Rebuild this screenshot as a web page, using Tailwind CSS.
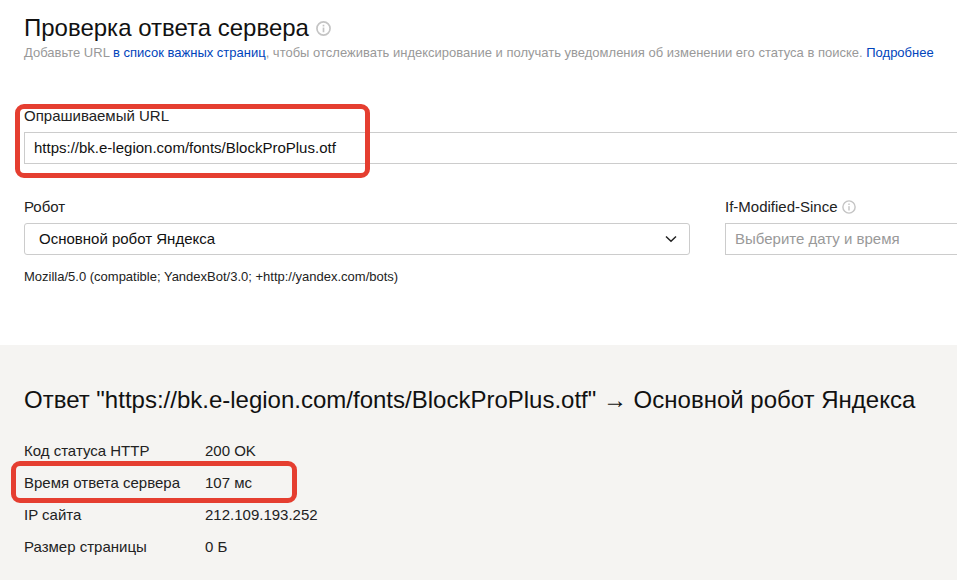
<!DOCTYPE html>
<html lang="ru">
<head>
    <meta charset="UTF-8">
    <title>Проверка ответа сервера</title>
    <script src="https://cdn.jsdelivr.net/npm/@tailwindcss/browser@4"></script>
</head>
<body class="relative w-[957px] h-[580px] overflow-hidden bg-white text-[#111] font-['Liberation_Sans',Arial,sans-serif]">

<div class="h-[345px] pl-6 pt-[13px]">
    <div class="flex items-center h-[30px] gap-[7px]">
        <h1 class="text-[24px] leading-[30px]">Проверка ответа сервера</h1>
        <svg class="w-[15px] h-[15px] mt-[1px]" viewBox="0 0 16 16" fill="none">
            <circle cx="8" cy="8" r="7" stroke="#c4c4c4" stroke-width="1.8"/>
            <rect x="7.1" y="7" width="1.8" height="5" fill="#c4c4c4"/>
            <rect x="7.1" y="4" width="1.8" height="1.8" fill="#c4c4c4"/>
        </svg>
    </div>
    <p class="text-[13px] leading-[16px] mt-[2px] text-[#999] whitespace-nowrap">
        Добавьте URL <a class="text-[#04b]">в список важных страниц</a>, чтобы отслеживать индексирование и получать уведомления об изменении его статуса в поиске. <a class="text-[#04b]">Подробнее</a>
    </p>

    <label class="block text-[15px] leading-[18px] mt-[46px] text-[#222]">Опрашиваемый URL</label>
    <div class="mt-[7px] h-[32px] border border-r-0 border-[#ccc] pl-[9px] text-[15px] leading-[30px]">https://bk.e-legion.com/fonts/BlockProPlus.otf</div>

    <div class="flex mt-[34px]">
        <div class="w-[666px] shrink-0">
            <label class="block text-[15px] leading-[18px] text-[#222]">Робот</label>
            <div class="mt-[7px] h-[32px] flex items-center justify-between border border-[#ccc] rounded-[3px] pl-[14px] pr-[12px] text-[15px]">
                <span>Основной робот Яндекса</span>
                <svg class="w-[12px] h-[8px]" viewBox="0 0 12 8" fill="none">
                    <path d="M1 1.5 L6 6.2 L11 1.5" stroke="#222" stroke-width="1.5"/>
                </svg>
            </div>
        </div>
        <div class="ml-[35px] flex-1">
            <div class="flex items-center gap-[4px] h-[18px]">
                <label class="text-[15px] leading-[18px] text-[#222]">If-Modified-Since</label>
                <svg class="w-[14px] h-[14px]" viewBox="0 0 16 16" fill="none">
                    <circle cx="8" cy="8" r="7" stroke="#c4c4c4" stroke-width="1.6"/>
                    <rect x="7.2" y="7" width="1.6" height="5" fill="#c4c4c4"/>
                    <rect x="7.2" y="4" width="1.6" height="1.7" fill="#c4c4c4"/>
                </svg>
            </div>
            <div class="mt-[7px] h-[32px] border border-r-0 border-[#ccc] pl-[9px] text-[15px] leading-[30px] text-[#999]">Выберите дату и время</div>
        </div>
    </div>
    <p class="text-[13px] leading-[16px] mt-[14px] text-[#222]">Mozilla/5.0 (compatible; YandexBot/3.0; +http://yandex.com/bots)</p>
</div>

<div class="h-[235px] bg-[#f5f4f2] pl-6 pt-[40px]">
    <h2 class="text-[24px] leading-[30px] whitespace-nowrap">Ответ "https://bk.e-legion.com/fonts/BlockProPlus.otf" → Основной робот Яндекса</h2>
    <dl class="mt-[20px] grid grid-cols-[181px_1fr] auto-rows-[32px] items-center text-[15px] text-[#222]">
        <dt>Код статуса HTTP</dt><dd>200 OK</dd>
        <dt>Время ответа сервера</dt><dd>107 мс</dd>
        <dt>IP сайта</dt><dd>212.109.193.252</dd>
        <dt>Размер страницы</dt><dd>0 Б</dd>
    </dl>
</div>

<!-- red highlight frames -->
<div class="absolute left-[15px] top-[104px] w-[355px] h-[74px] border-[5px] border-[#e53e30] rounded-[9px]"></div>
<div class="absolute left-[11px] top-[461px] w-[286px] h-[42px] border-[5px] border-[#e53e30] rounded-[9px]"></div>

</body>
</html>
